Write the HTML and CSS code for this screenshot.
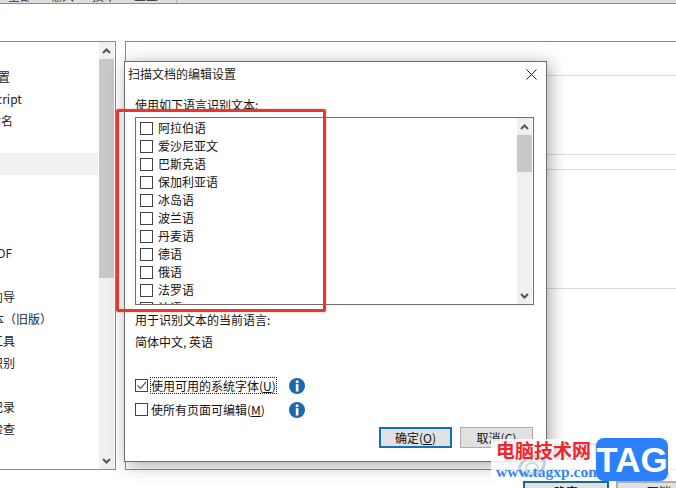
FILE: index.html
```html
<!DOCTYPE html>
<html lang="zh-CN">
<head>
    <meta charset="UTF-8">
    <title>扫描文档的编辑设置</title>
    <link rel="stylesheet" href="styles.css">
</head>
<body>
    <div class="tabs">
        <span>全部</span><span>输入</span><span>技术</span><span>正正</span><i class="tab-sep"></i>
    </div>

    <div class="panels">
        <div class="side-panel">
            <ul class="side-list">
                <li class="side-row cut-a">文档设置</li>
                <li class="side-row cut-b">JavaScript</li>
                <li class="side-row cut-c">文件命名</li>
                <li class="side-row"></li>
                <li class="side-row active"></li>
                <li class="side-row"></li>
                <li class="side-row"></li>
                <li class="side-row"></li>
                <li class="side-row cut-d">创建 PDF</li>
                <li class="side-row"></li>
                <li class="side-row cut-e">安装向导</li>
                <li class="side-row cut-f">样本（旧版）</li>
                <li class="side-row cut-e">辅助工具</li>
                <li class="side-row cut-e">文本识别</li>
                <li class="side-row"></li>
                <li class="side-row cut-e">历史记录</li>
                <li class="side-row cut-e">拼写检查</li>
            </ul>
            <div class="scrollbar">
                <div class="scroll-btn">
                    <svg width="9" height="6" viewBox="0 0 9 6"><path d="M1 5L4.500 1.500L8 5" fill="none" stroke="#555" stroke-width="2"/></svg>
                </div>
                <div class="thumb thumb-long"></div>
                <div class="track"></div>
                <div class="scroll-btn">
                    <svg width="9" height="6" viewBox="0 0 9 6"><path d="M1 1L4.500 4.500L8 1" fill="none" stroke="#555" stroke-width="2"/></svg>
                </div>
            </div>
        </div>
        <div class="main-panel">
            <div class="section sec-1"></div>
            <div class="section sec-2"></div>
            <div class="section sec-3"></div>
            <div class="section sec-4"></div>
        </div>
    </div>

    <div class="footer">
        <button class="page-btn primary">确定</button>
        <button class="page-btn">取消</button>
    </div>

    <!-- 对话框 -->
    <div class="dialog">
        <div class="dialog-title">
            <span>扫描文档的编辑设置</span>
            <svg class="close" width="11" height="11" viewBox="0 0 11 11"><path d="M0.500 0.500L10.500 10.500M10.500 0.500L0.500 10.500" stroke="#222" stroke-width="1"/></svg>
        </div>
        <div class="dialog-body">
            <p class="label">使用如下语言识别文本:</p>
            <div class="lang-box">
                <ul class="lang-list">
                    <li class="lang-row"><span class="check"></span><span>阿拉伯语</span></li>
                    <li class="lang-row"><span class="check"></span><span>爱沙尼亚文</span></li>
                    <li class="lang-row"><span class="check"></span><span>巴斯克语</span></li>
                    <li class="lang-row"><span class="check"></span><span>保加利亚语</span></li>
                    <li class="lang-row"><span class="check"></span><span>冰岛语</span></li>
                    <li class="lang-row"><span class="check"></span><span>波兰语</span></li>
                    <li class="lang-row"><span class="check"></span><span>丹麦语</span></li>
                    <li class="lang-row"><span class="check"></span><span>德语</span></li>
                    <li class="lang-row"><span class="check"></span><span>俄语</span></li>
                    <li class="lang-row"><span class="check"></span><span>法罗语</span></li>
                    <li class="lang-row"><span class="check"></span><span>法语</span></li>
                </ul>
                <div class="scrollbar">
                    <div class="scroll-btn">
                        <svg width="9" height="6" viewBox="0 0 9 6"><path d="M1 5L4.500 1.500L8 5" fill="none" stroke="#555" stroke-width="2"/></svg>
                    </div>
                    <div class="thumb thumb-short"></div>
                    <div class="track"></div>
                    <div class="scroll-btn">
                        <svg width="9" height="6" viewBox="0 0 9 6"><path d="M1 1L4.500 4.500L8 1" fill="none" stroke="#555" stroke-width="2"/></svg>
                    </div>
                </div>
            </div>
            <p class="label current-label">用于识别文本的当前语言:</p>
            <p class="label current-value">简体中文, 英语</p>

            <div class="option first">
                <span class="check">
                    <svg width="11" height="11" viewBox="0 0 11 11"><path d="M1.500 5.500L4.500 8.500L10 2" fill="none" stroke="#666" stroke-width="1.300"/></svg>
                </span>
                <span class="option-text focused">使用可用的系统字体(<u>U</u>)</span>
                <svg class="info" width="16" height="16" viewBox="0 0 16 16"><circle cx="8" cy="8" r="8" fill="#1f68ac"/><rect x="6.800" y="2.500" width="2.600" height="2.600" fill="#fff"/><rect x="6.800" y="6.200" width="2.600" height="7.300" fill="#fff"/></svg>
            </div>
            <div class="option">
                <span class="check"></span>
                <span class="option-text">使所有页面可编辑(<u>M</u>)</span>
                <svg class="info" width="16" height="16" viewBox="0 0 16 16"><circle cx="8" cy="8" r="8" fill="#1f68ac"/><rect x="6.800" y="2.500" width="2.600" height="2.600" fill="#fff"/><rect x="6.800" y="6.200" width="2.600" height="7.300" fill="#fff"/></svg>
            </div>

            <div class="dialog-buttons">
                <button class="btn default">确定(<u>O</u>)</button>
                <button class="btn">取消(<u>C</u>)</button>
            </div>
        </div>
    </div>

    <!-- 红框标注 -->
    <div class="red-box"></div>

    <!-- 水印 -->
    <div class="watermark">
        <span class="faint-name">极光下载站</span>
        <span class="faint-url">www.xz7.com</span>
        <svg class="swirl" width="30" height="30" viewBox="0 0 30 30"><ellipse cx="15" cy="15" rx="13" ry="9" fill="none" stroke="#b9d3e6" stroke-width="3" transform="rotate(-25 15 15)"/><ellipse cx="15" cy="17" rx="6" ry="5" fill="none" stroke="#c9e0cf" stroke-width="2"/></svg>
        <div class="wm-text">
            <div class="wm-name">电脑技术网</div>
            <div class="wm-url">www.tagxp.com</div>
        </div>
        <div class="wm-tag">TAG</div>
    </div>
</body>
</html>
```

FILE: styles.css
```css
body {
    margin: 0;
    width: 676px;
    height: 488px;
    overflow: hidden;
    position: relative;
    background-color: white;
    color: #111;
    font-family: "Noto Sans CJK SC", "Noto Sans", sans-serif;
    font-size: 12px;
}
ul, p {
    margin: 0;
    padding: 0;
    list-style: none;
}

/* Top strip */
.tabs {
    height: 3px;
    display: flex;
    gap: 20px;
    padding-left: 8px;
    overflow: hidden;
    background-color: #dedede;
    border-bottom: 1px solid #8a8a8a;
    line-height: 14px;
    color: #333;
}
.tabs span {
    width: 22px;
    margin-top: -11px;
    white-space: nowrap;
}
.tab-sep {
    width: 1px;
    background-color: #b4b4b4;
}

/* Panels behind the dialog */
.panels {
    display: flex;
    height: 429px;
    margin-top: 37px;
    gap: 9px;
}
.side-panel {
    width: 116px;
    display: flex;
    overflow: hidden;
    border: 1px solid #8a8a8a;
    border-left: none;
    box-sizing: border-box;
    flex-shrink: 0;
}
.side-list {
    width: 98px;
    padding-top: 23px;
    overflow: hidden;
    flex-shrink: 0;
}
.side-row {
    height: 22px;
    line-height: 24px;
    white-space: nowrap;
    color: #222;
}
.side-row.active {
    background-color: #f0f0f0;
}
.cut-a { margin-left: -38px; }
.cut-b { margin-left: -37px; }
.cut-c { margin-left: -35px; }
.cut-d { margin-left: -37px; }
.cut-e { margin-left: -33px; }
.cut-f { margin-left: -20px; }

.scrollbar {
    width: 15px;
    margin-left: 1px;
    display: flex;
    flex-direction: column;
    background-color: #f0f0f0;
    flex-shrink: 0;
}
.side-panel .scrollbar {
    margin-right: 1px;
}
.scroll-btn {
    height: 17px;
    display: flex;
    align-items: center;
    justify-content: center;
    flex-shrink: 0;
}
.thumb {
    background-color: #c8c8c8;
}
.thumb-long {
    height: 219px;
}
.thumb-short {
    height: 37px;
}
.track {
    flex: 1;
}

.main-panel {
    flex: 1;
    border: 1px solid #8a8a8a;
    border-right: none;
}
.section {
    border-bottom: 1px solid #dcdcdc;
}
.sec-1 { height: 33px; }
.sec-2 { height: 78px; }
.sec-3 { height: 14px; }
.sec-4 { height: 118px; }

/* Page buttons, clipped by the window */
.footer {
    display: flex;
    justify-content: flex-end;
    gap: 7px;
    margin-top: 11px;
    margin-right: -26px;
}
.page-btn {
    width: 86px;
    height: 20px;
    padding: 0;
    font: inherit;
    background-color: #e1e1e1;
    border: 2px solid #adadad;
}
.page-btn.primary {
    border-color: #1a6a8c;
}

/* Dialog */
.dialog {
    position: absolute;
    left: 124px;
    top: 61px;
    width: 421px;
    height: 399px;
    background-color: white;
    border: 1px solid #6e6e6e;
    box-shadow: 3px 3px 16px rgba(0,0,0,0.35);
}
.dialog-title {
    height: 24px;
    line-height: 24px;
    padding: 0 9px 0 3px;
    display: flex;
    justify-content: space-between;
    align-items: center;
    color: #222;
}
.dialog-body {
    padding: 11px 12px 0 10px;
}
.label {
    line-height: 16px;
}
.lang-box {
    display: flex;
    justify-content: space-between;
    height: 186px;
    margin-top: 4px;
    border: 1px solid #6e6e6e;
    overflow: hidden;
}
.lang-list {
    padding: 1px 0 0 4px;
}
.lang-row {
    height: 18px;
    display: flex;
    align-items: center;
    gap: 5px;
    line-height: 18px;
}
.lang-box .scrollbar {
    margin-right: 1px;
}
.check {
    width: 11px;
    height: 11px;
    display: block;
    border: 1px solid #444;
    background-color: white;
    flex-shrink: 0;
}
.check svg {
    display: block;
}
.current-label {
    margin-top: 7px;
}
.current-value {
    margin-top: 6px;
}
.option {
    display: grid;
    grid-template-columns: 13px 135px 16px;
    column-gap: 3px;
    align-items: center;
    height: 16px;
    margin-top: 8px;
}
.option.first {
    margin-top: 27px;
}
.option-text {
    justify-self: start;
    margin-left: -1px;
    line-height: 15px;
    border: 1px dotted transparent;
    white-space: nowrap;
}
.option-text.focused {
    border-color: #222;
}
.dialog-buttons {
    display: flex;
    justify-content: flex-end;
    gap: 8px;
    margin-top: 10px;
    margin-right: 1px;
}
.btn {
    width: 73px;
    height: 21px;
    padding: 0;
    font: inherit;
    color: #111;
    background-color: #e1e1e1;
    border: 1px solid #adadad;
}
.btn.default {
    border: 2px solid #0f72b4;
}

/* Red annotation */
.red-box {
    position: absolute;
    left: 116px;
    top: 109px;
    width: 204px;
    height: 197px;
    border: 3px solid #e5392f;
    border-radius: 2px;
    box-shadow: 0 0 2px rgba(229,57,47,0.5);
}

/* Watermark */
.watermark {
    position: absolute;
    left: 491px;
    top: 439px;
    right: 0;
    bottom: 7px;
    display: flex;
    background-color: rgba(255,255,255,0.85);
}
.faint-name {
    position: absolute;
    left: 60px;
    top: 0;
    font-size: 18px;
    line-height: 22px;
    color: #d5dee6;
    white-space: nowrap;
}
.faint-url {
    position: absolute;
    left: 92px;
    top: 25px;
    font-family: "Liberation Serif", serif;
    font-size: 15px;
    font-weight: bold;
    line-height: 18px;
    color: #dbe6d8;
    white-space: nowrap;
}
.swirl {
    position: absolute;
    left: 26px;
    top: 12px;
}
.wm-text {
    position: relative;
    width: 105px;
    padding-left: 5px;
    box-sizing: border-box;
    flex-shrink: 0;
}
.wm-name {
    font-size: 19px;
    font-weight: bold;
    line-height: 22px;
    white-space: nowrap;
    color: #f0262c;
}
.wm-url {
    margin-top: 2px;
    font-family: "Liberation Serif", serif;
    font-size: 15.500px;
    font-weight: bold;
    line-height: 18px;
    white-space: nowrap;
    color: #3a86e8;
}
.wm-tag {
    position: relative;
    width: 72px;
    height: 43px;
    margin-top: -1px;
    border-radius: 8px;
    background-color: #2c80fb;
    color: white;
    font-family: "Liberation Sans", sans-serif;
    font-size: 35px;
    font-weight: bold;
    line-height: 43px;
    text-align: center;
}
```
